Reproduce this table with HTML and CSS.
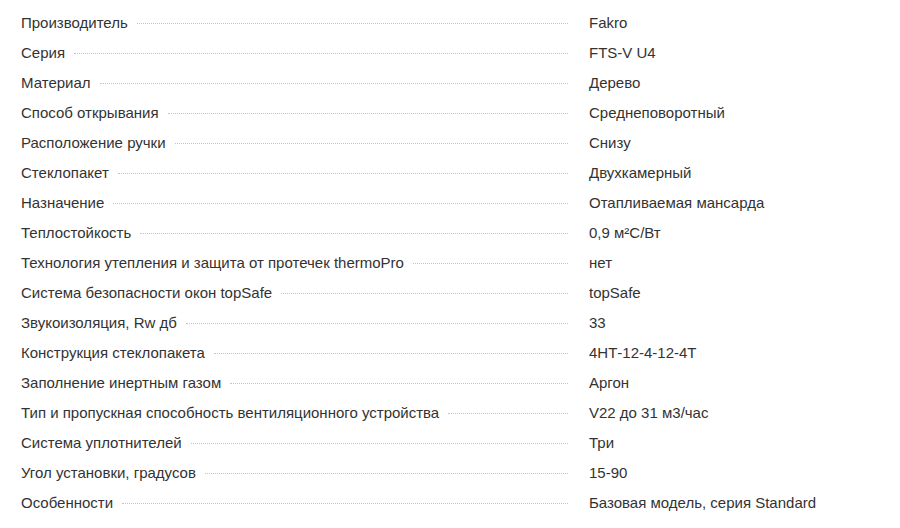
FILE: index.html
```html
<!DOCTYPE html>
<html lang="ru">
<head>
<meta charset="utf-8">
<title>Характеристики</title>
<link rel="stylesheet" href="styles.css">
</head>
<body>
<div class="specs">
  <div class="row"><div class="name"><span class="label">Производитель</span><span class="dots"></span></div><div class="value">Fakro</div></div>
  <div class="row"><div class="name"><span class="label">Серия</span><span class="dots"></span></div><div class="value">FTS-V U4</div></div>
  <div class="row"><div class="name"><span class="label">Материал</span><span class="dots"></span></div><div class="value">Дерево</div></div>
  <div class="row"><div class="name"><span class="label">Способ открывания</span><span class="dots"></span></div><div class="value">Среднеповоротный</div></div>
  <div class="row"><div class="name"><span class="label">Расположение ручки</span><span class="dots"></span></div><div class="value">Снизу</div></div>
  <div class="row"><div class="name"><span class="label">Стеклопакет</span><span class="dots"></span></div><div class="value">Двухкамерный</div></div>
  <div class="row"><div class="name"><span class="label">Назначение</span><span class="dots"></span></div><div class="value">Отапливаемая мансарда</div></div>
  <div class="row"><div class="name"><span class="label">Теплостойкость</span><span class="dots"></span></div><div class="value">0,9 м²С/Вт</div></div>
  <div class="row"><div class="name"><span class="label">Технология утепления и защита от протечек thermoPro</span><span class="dots"></span></div><div class="value">нет</div></div>
  <div class="row"><div class="name"><span class="label">Система безопасности окон topSafe</span><span class="dots"></span></div><div class="value">topSafe</div></div>
  <div class="row"><div class="name"><span class="label">Звукоизоляция, Rw дб</span><span class="dots"></span></div><div class="value">33</div></div>
  <div class="row"><div class="name"><span class="label">Конструкция стеклопакета</span><span class="dots"></span></div><div class="value">4НТ-12-4-12-4Т</div></div>
  <div class="row"><div class="name"><span class="label">Заполнение инертным газом</span><span class="dots"></span></div><div class="value">Аргон</div></div>
  <div class="row"><div class="name"><span class="label">Тип и пропускная способность вентиляционного устройства</span><span class="dots"></span></div><div class="value">V22 до 31 м3/час</div></div>
  <div class="row"><div class="name"><span class="label">Система уплотнителей</span><span class="dots"></span></div><div class="value">Три</div></div>
  <div class="row"><div class="name"><span class="label">Угол установки, градусов</span><span class="dots"></span></div><div class="value">15-90</div></div>
  <div class="row"><div class="name"><span class="label">Особенности</span><span class="dots"></span></div><div class="value">Базовая модель, серия Standard</div></div>
</div>
</body>
</html>
```
FILE: styles.css
```css
html, body {
  margin: 0;
  padding: 0;
  background: #ffffff;
}
body {
  font-family: "Liberation Sans", Arial, sans-serif;
  font-size: 15px;
  color: #333333;
}
.specs {
  padding: 8px 0 0 21px;
}
.row {
  display: flex;
  height: 30px;
  line-height: 30px;
}
.name {
  width: 547px;
  display: flex;
  align-items: flex-start;
}
.label {
  white-space: nowrap;
}
.dots {
  flex: 1;
  margin-left: 9px;
  height: 15px;
  border-bottom: 1px dotted #c4c4c4;
}
.value {
  margin-left: 21px;
  white-space: nowrap;
}
```
